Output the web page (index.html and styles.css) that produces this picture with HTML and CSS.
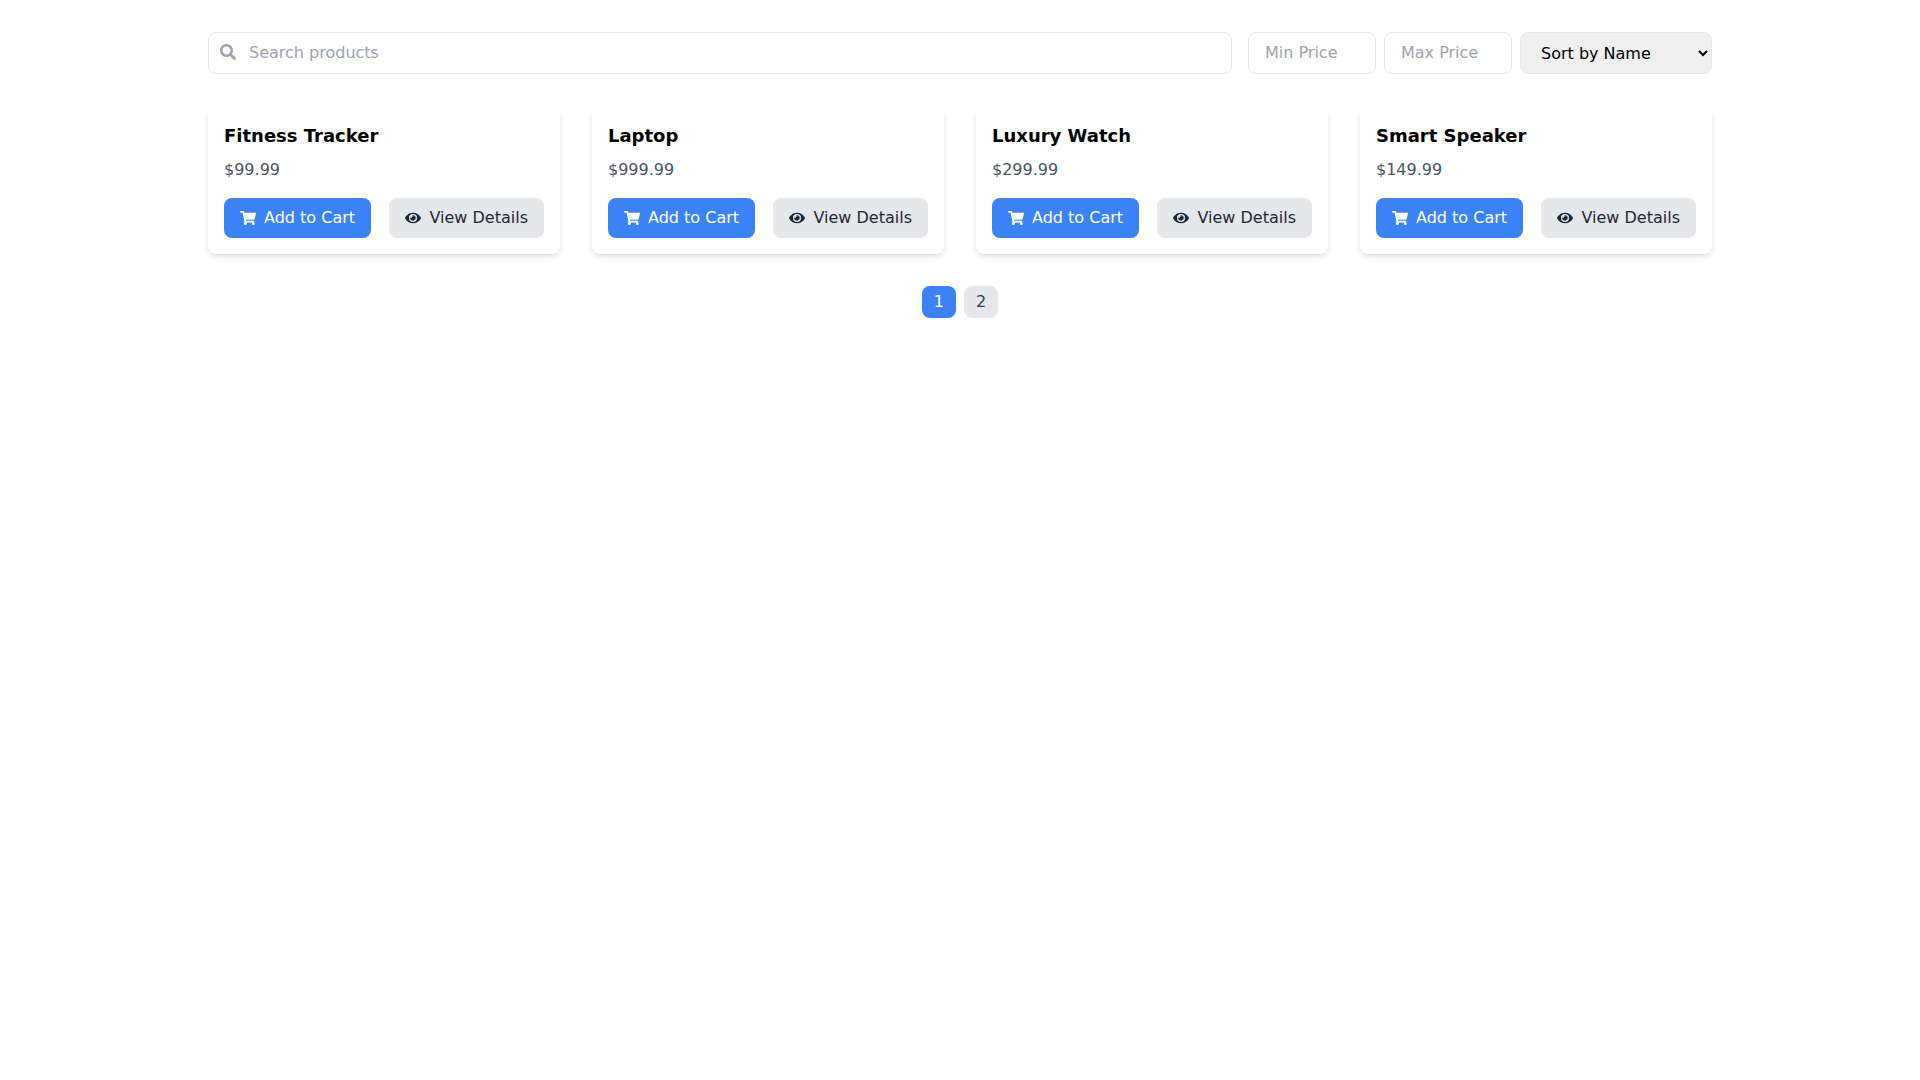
FILE: index.html
```
<!DOCTYPE html>
<html lang="en">
<head>
  <meta charset="UTF-8">
  <meta name="viewport" content="width=device-width, initial-scale=1.0">
  <title>Products</title>
  <link rel="stylesheet" href="styles.css">
</head>
<body>

  <!-- Icons shared by the buttons -->
  <svg class="icon-defs" aria-hidden="true">
    <symbol id="icon-search" viewBox="0 0 512 512">
      <path d="M505 442.7L405.3 343c-4.5-4.5-10.6-7-17-7H372c27.6-35.3 44-79.7 44-128C416 93.1 322.9 0 208 0S0 93.1 0 208s93.1 208 208 208c48.300 0 92.700-16.400 128-44v16.300c0 6.400 2.500 12.500 7 17l99.700 99.700c9.400 9.400 24.600 9.400 33.900 0l28.300-28.300c9.400-9.400 9.400-24.600.1-34zM208 336c-70.700 0-128-57.200-128-128 0-70.700 57.200-128 128-128 70.700 0 128 57.200 128 128 0 70.700-57.200 128-128 128z"/>
    </symbol>
    <symbol id="icon-cart" viewBox="0 0 576 512">
      <path d="M528.120 301.319l47.273-208C578.806 78.301 567.391 64 551.990 64H159.208l-9.166-44.810C147.758 8.021 137.930 0 126.529 0H24C10.745 0 0 10.745 0 24v16c0 13.255 10.745 24 24 24h69.883l70.248 343.435C147.325 417.100 136 435.222 136 456c0 30.928 25.072 56 56 56s56-25.072 56-56c0-15.674-6.447-29.835-16.824-40h209.647C430.447 426.165 424 440.326 424 456c0 30.928 25.072 56 56 56s56-25.072 56-56c0-22.172-12.888-41.332-31.579-50.405l5.517-24.276c3.413-15.018-8.002-29.319-23.403-29.319H218.117l-6.545-32h293.145c11.206 0 20.920-7.754 23.403-18.681z"/>
    </symbol>
    <symbol id="icon-eye" viewBox="0 0 576 512">
      <path d="M572.520 241.400C518.290 135.590 410.930 64 288 64S57.680 135.640 3.480 241.410a32.350 32.350 0 0 0 0 29.190C57.710 376.410 165.070 448 288 448s230.320-71.640 284.520-177.410a32.350 32.350 0 0 0 0-29.190zM288 400a144 144 0 1 1 144-144 143.930 143.930 0 0 1-144 144zm0-240a95.310 95.310 0 0 0-25.310 3.790 47.850 47.850 0 0 1-66.900 66.900A95.780 95.780 0 1 0 288 160z"/>
    </symbol>
  </svg>

  <div class="container">
    <div class="toolbar">
      <div class="search">
        <svg class="search-icon" aria-hidden="true"><use href="#icon-search"/></svg>
        <input type="text" class="field" placeholder="Search products" aria-label="Search products">
      </div>
      <div class="filters">
        <input type="number" class="field price-field" placeholder="Min Price" aria-label="Min Price">
        <input type="number" class="field price-field" placeholder="Max Price" aria-label="Max Price">
        <select class="field sort" aria-label="Sort by">
          <option>Sort by Name</option>
          <option>Sort by Price</option>
        </select>
      </div>
    </div>

    <div class="products">
      <div class="card">
        <h2>Fitness Tracker</h2>
        <p class="price">$99.99</p>
        <div class="actions">
          <button class="btn btn-primary"><svg class="icon" aria-hidden="true"><use href="#icon-cart"/></svg>Add to Cart</button>
          <button class="btn"><svg class="icon" aria-hidden="true"><use href="#icon-eye"/></svg>View Details</button>
        </div>
      </div>
      <div class="card">
        <h2>Laptop</h2>
        <p class="price">$999.99</p>
        <div class="actions">
          <button class="btn btn-primary"><svg class="icon" aria-hidden="true"><use href="#icon-cart"/></svg>Add to Cart</button>
          <button class="btn"><svg class="icon" aria-hidden="true"><use href="#icon-eye"/></svg>View Details</button>
        </div>
      </div>
      <div class="card">
        <h2>Luxury Watch</h2>
        <p class="price">$299.99</p>
        <div class="actions">
          <button class="btn btn-primary"><svg class="icon" aria-hidden="true"><use href="#icon-cart"/></svg>Add to Cart</button>
          <button class="btn"><svg class="icon" aria-hidden="true"><use href="#icon-eye"/></svg>View Details</button>
        </div>
      </div>
      <div class="card">
        <h2>Smart Speaker</h2>
        <p class="price">$149.99</p>
        <div class="actions">
          <button class="btn btn-primary"><svg class="icon" aria-hidden="true"><use href="#icon-cart"/></svg>Add to Cart</button>
          <button class="btn"><svg class="icon" aria-hidden="true"><use href="#icon-eye"/></svg>View Details</button>
        </div>
      </div>
    </div>

    <div class="pagination">
      <button class="page active">1</button>
      <button class="page">2</button>
    </div>
  </div>

</body>
</html>
```
FILE: styles.css
```
* {
  box-sizing: border-box;
}

body {
  margin: 0;
  background: #fff;
  color: #000;
  font-family: "DejaVu Sans", sans-serif;
  font-size: 16px;
  line-height: 1.5;
}

h2, p {
  margin: 0;
}

button, input, select {
  margin: 0;
  font: inherit;
}

button {
  border: none;
  cursor: pointer;
}

.icon-defs {
  display: none;
}

.container {
  max-width: 1536px;
  margin: 0 auto;
  padding: 32px 16px;
}

.toolbar {
  display: flex;
  gap: 16px;
  margin-bottom: 32px;
}

.search {
  position: relative;
  flex: 1;
}

.search .field {
  width: 100%;
  padding-left: 40px;
}

.search-icon {
  position: absolute;
  top: 12px;
  left: 12px;
  width: 16px;
  height: 16px;
  fill: #9ca3af;
}

.filters {
  display: flex;
  gap: 8px;
}

.field {
  padding: 8px 16px;
  border: 1px solid #e5e7eb;
  border-radius: 8px;
  color: #000;
}

.field::placeholder {
  color: #9ca3af;
  opacity: 1;
}

.price-field {
  width: 128px;
}

.sort {
  width: 192px;
  background-color: #efefef;
}

.products {
  display: grid;
  grid-template-columns: repeat(auto-fit, minmax(350px, 1fr));
  gap: 32px;
}

.card {
  padding: 16px;
  border-radius: 8px;
  box-shadow: 0 4px 6px -1px rgba(0, 0, 0, 0.1), 0 2px 4px -2px rgba(0, 0, 0, 0.1);
}

.card h2 {
  margin-bottom: 8px;
  font-size: 18px;
  font-weight: bold;
  line-height: 28px;
}

.price {
  margin-bottom: 16px;
  color: #4b5563;
}

.actions {
  display: flex;
  justify-content: space-between;
}

.btn {
  display: flex;
  align-items: center;
  gap: 8px;
  padding: 8px 16px;
  border-radius: 8px;
  background: #e5e7eb;
  color: #1f2937;
}

.btn-primary {
  background: #3b82f6;
  color: #fff;
}

.icon {
  width: 16px;
  height: 16px;
  fill: currentColor;
}

.pagination {
  display: flex;
  justify-content: center;
  gap: 8px;
  margin-top: 32px;
}

.page {
  padding: 4px 12px;
  border-radius: 8px;
  background: #e5e7eb;
  color: #374151;
}

.page.active {
  background: #3b82f6;
  color: #fff;
}
```
